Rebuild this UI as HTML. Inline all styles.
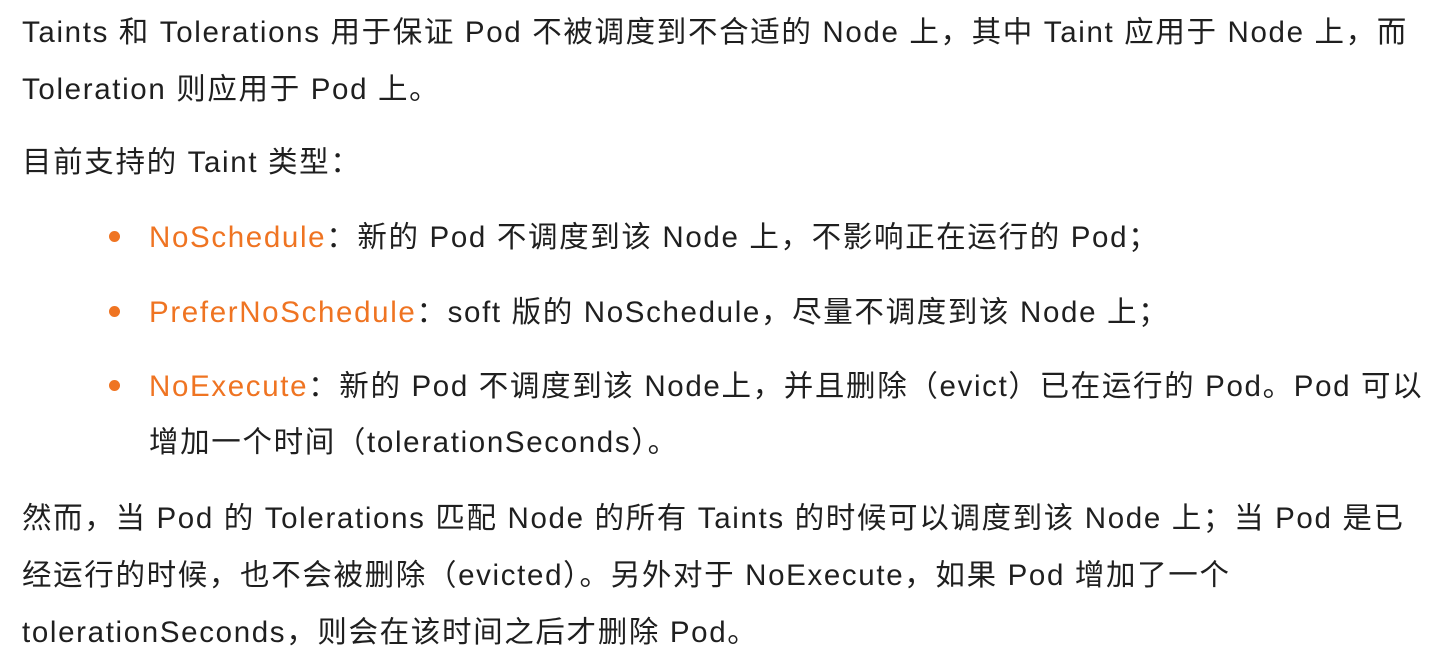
<!DOCTYPE html>
<html><head><meta charset="utf-8"><style>
body{margin:0;width:1433px;height:670px;background:#fff;overflow:hidden;font-family:"Liberation Sans","Noto Sans CJK SC",sans-serif;font-size:29.5px;letter-spacing:1.65px;color:#1f1f1f;}
.l{position:absolute;white-space:nowrap;line-height:40px;}
.o{color:#ef7422;}
.d{position:absolute;left:109px;width:11px;height:11px;border-radius:50%;background:#ef7422;}
</style></head><body>
<div class="l" style="left:22px;top:13px">Taints 和 Tolerations 用于保证 Pod 不被调度到不合适的 Node 上，其中 Taint 应用于 Node 上，而</div>
<div class="l" style="left:22px;top:70px">Toleration 则应用于 Pod 上。</div>
<div class="l" style="left:22px;top:143px">目前支持的 Taint 类型：</div>
<div class="d" style="top:231px"></div>
<div class="l" style="left:149px;top:218px"><span class="o">NoSchedule</span>：新的 Pod 不调度到该 Node 上，不影响正在运行的 Pod；</div>
<div class="d" style="top:306px"></div>
<div class="l" style="left:149px;top:293px"><span class="o">PreferNoSchedule</span>：soft 版的 NoSchedule，尽量不调度到该 Node 上；</div>
<div class="d" style="top:380px"></div>
<div class="l" style="left:149px;top:367px"><span class="o">NoExecute</span>：新的 Pod 不调度到该 Node上，并且删除（evict）已在运行的 Pod。Pod 可以</div>
<div class="l" style="left:149px;top:423px">增加一个时间（tolerationSeconds）。</div>
<div class="l" style="left:22px;top:499px">然而，当 Pod 的 Tolerations 匹配 Node 的所有 Taints 的时候可以调度到该 Node 上；当 Pod 是已</div>
<div class="l" style="left:22px;top:556px">经运行的时候，也不会被删除（evicted）。另外对于 NoExecute，如果 Pod 增加了一个</div>
<div class="l" style="left:22px;top:613px">tolerationSeconds，则会在该时间之后才删除 Pod。</div>
</body></html>
